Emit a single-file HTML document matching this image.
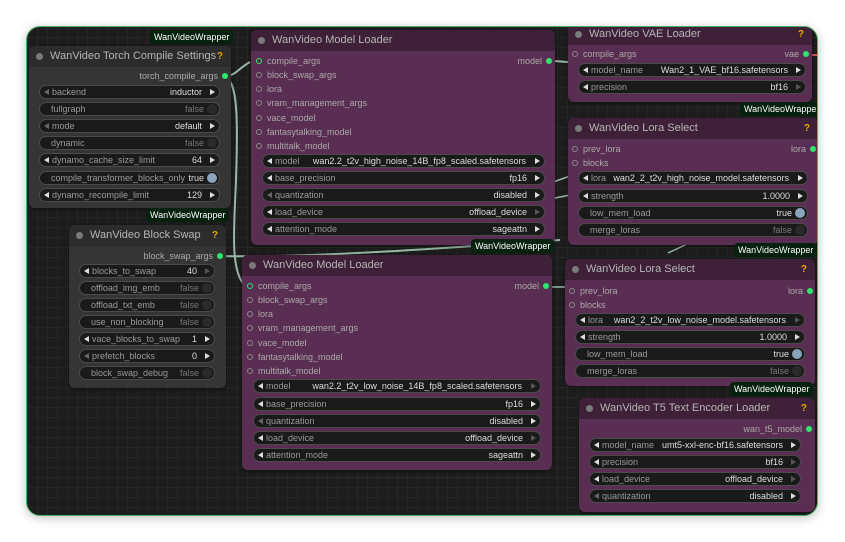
<!DOCTYPE html>
<html><head><meta charset="utf-8"><style>
*{box-sizing:border-box;margin:0;padding:0}
body{width:845px;height:542px;background:#fff;position:relative;overflow:hidden;font-family:"Liberation Sans",sans-serif;}
#cv{position:absolute;left:26px;top:26px;width:792px;height:490px;border:1px solid #4caf64;border-radius:14px;overflow:hidden;
background-color:#1d1d1d;background-image:linear-gradient(#262626 1px,transparent 1px),linear-gradient(90deg,#262626 1px,transparent 1px);background-size:10px 10px;box-shadow:0 2px 10px rgba(0,0,0,.25)}
#in{position:absolute;left:-27px;top:-27px;width:845px;height:542px}
.a{position:absolute}
.n{position:absolute;border-radius:6px;background:#353535;box-shadow:0 1px 4px rgba(0,0,0,.5)}
.n.p{background:#5a2d52}
.t{position:absolute;left:0;top:0;right:0;height:21px;background:#2c2c2c;border-radius:6px 6px 0 0;color:#b5b5b5;font-size:11px;line-height:21px;padding-left:21px}
.p .t{background:#3e2139}
.t:before{content:"";position:absolute;left:7px;top:7px;width:7px;height:7px;border-radius:50%;background:#7a7a7a}
.q{position:absolute;right:8px;top:0;color:#f0a500;font-weight:bold;font-size:10px}
.b{position:absolute;background:#07210f;color:#fff;font-size:9px;height:14px;line-height:14px;padding:0 4px;border-radius:4px}
.w{position:absolute;height:14px;border-radius:7px;background:#1a1a1a;border:1px solid #4a4a4a;font-size:9px;color:#999;line-height:12px}
.w .l{position:absolute;left:12px}
.w .v{position:absolute;right:17px;color:#ddd}
.w:before{content:"";position:absolute;left:4px;top:3px;border:3.5px solid transparent;border-right:5px solid #ddd;border-left:0}
.w:after{content:"";position:absolute;right:4px;top:3px;border:3.5px solid transparent;border-left:5px solid #ddd;border-right:0}
.w.d:after{border-left-color:#555}.w.dl:before{border-right-color:#666}
.w.tg:before,.w.tg:after{display:none}
.w.tg .l{left:11px}
.w.tg .v{right:15px;color:#777}
.w.tg i{position:absolute;right:2px;top:1px;width:10px;height:10px;border-radius:50%;background:#2a2a2a}
.w.tg.on .v{color:#ddd}.w.tg.on i{background:#8aa4be}
.r{position:absolute;font-size:9px;color:#aaa;line-height:12px}
.r.i{padding-left:11px}
.r.i:before{content:"";position:absolute;left:0;top:3px;width:4px;height:4px;border:1.5px solid #888;border-radius:50%}
.r.g:before{border-color:#2ee66b}
.r.o{padding-right:10px;text-align:right}
.r.o:after{content:"";position:absolute;right:0;top:3px;width:6px;height:6px;border-radius:50%;background:#2ee66b}
</style></head><body>
<div id="cv"><div id="in">
<svg class="a" style="left:0;top:0" width="845" height="542" fill="none" stroke="#9ab8a8" stroke-width="2">
<path d="M224 76 C236 76 236 70 250 62"/>
<path d="M224 76 C238 80 238 120 236 180 C234 230 230 270 245 286"/>
<path d="M218 256 C300 258 420 250 560 240"/>
<path d="M552 61 C560 61 562 62 570 62"/>
<path d="M545 185 L570 176" stroke-width="1.5"/>
<path d="M545 200 L570 195" stroke-width="1.5"/>
<path d="M668 253 L700 238" stroke-width="1.5"/>
<path d="M548 287 L566 287" stroke-width="1.5"/>
<path d="M812 55 L818 55" stroke="#d55"/>
</svg>

<!-- Torch compile -->
<div class="b" style="left:150px;top:30px">WanVideoWrapper</div>
<div class="n" style="left:29px;top:46px;width:202px;height:162px"><div class="t">WanVideo Torch Compile Settings<span class="q">?</span></div></div>
<div class="r o" style="left:120px;top:70px;width:108px">torch_compile_args</div>
<div class="w dl" style="left:39px;top:85px;width:181px"><span class="l">backend</span><span class="v">inductor</span></div>
<div class="w tg" style="left:39px;top:102px;width:181px"><span class="l">fullgraph</span><span class="v">false</span><i></i></div>
<div class="w dl" style="left:39px;top:119px;width:181px"><span class="l">mode</span><span class="v">default</span></div>
<div class="w tg" style="left:39px;top:136px;width:181px"><span class="l">dynamic</span><span class="v">false</span><i></i></div>
<div class="w" style="left:39px;top:153px;width:181px"><span class="l">dynamo_cache_size_limit</span><span class="v">64</span></div>
<div class="w tg on" style="left:39px;top:171px;width:181px"><span class="l">compile_transformer_blocks_only</span><span class="v">true</span><i></i></div>
<div class="w" style="left:39px;top:188px;width:181px"><span class="l">dynamo_recompile_limit</span><span class="v">129</span></div>

<!-- Block swap -->
<div class="b" style="left:146px;top:208px">WanVideoWrapper</div>
<div class="n" style="left:69px;top:225px;width:157px;height:163px"><div class="t">WanVideo Block Swap<span class="q">?</span></div></div>
<div class="r o" style="left:120px;top:250px;width:103px">block_swap_args</div>
<div class="w d" style="left:79px;top:264px;width:136px"><span class="l">blocks_to_swap</span><span class="v">40</span></div>
<div class="w tg" style="left:79px;top:281px;width:136px"><span class="l">offload_img_emb</span><span class="v">false</span><i></i></div>
<div class="w tg" style="left:79px;top:298px;width:136px"><span class="l">offload_txt_emb</span><span class="v">false</span><i></i></div>
<div class="w tg" style="left:79px;top:315px;width:136px"><span class="l">use_non_blocking</span><span class="v">false</span><i></i></div>
<div class="w" style="left:79px;top:332px;width:136px"><span class="l">vace_blocks_to_swap</span><span class="v">1</span></div>
<div class="w dl" style="left:79px;top:349px;width:136px"><span class="l">prefetch_blocks</span><span class="v">0</span></div>
<div class="w tg" style="left:79px;top:366px;width:136px"><span class="l">block_swap_debug</span><span class="v">false</span><i></i></div>

<!-- Model loader 1 -->
<div class="n p" style="left:251px;top:30px;width:304px;height:215px"><div class="t">WanVideo Model Loader</div></div>
<div class="r i g" style="left:256px;top:55px">compile_args</div>
<div class="r i" style="left:256px;top:69px">block_swap_args</div>
<div class="r i" style="left:256px;top:83px">lora</div>
<div class="r i" style="left:256px;top:97px">vram_management_args</div>
<div class="r i" style="left:256px;top:112px">vace_model</div>
<div class="r i" style="left:256px;top:126px">fantasytalking_model</div>
<div class="r i" style="left:256px;top:140px">multitalk_model</div>
<div class="r o" style="left:480px;top:55px;width:72px">model</div>
<div class="w" style="left:262px;top:154px;width:283px"><span class="l">model</span><span class="v" style="right:18px">wan2.2_t2v_high_noise_14B_fp8_scaled.safetensors</span></div>
<div class="w" style="left:262px;top:171px;width:283px"><span class="l">base_precision</span><span class="v">fp16</span></div>
<div class="w dl" style="left:262px;top:188px;width:283px"><span class="l">quantization</span><span class="v">disabled</span></div>
<div class="w d" style="left:262px;top:205px;width:283px"><span class="l">load_device</span><span class="v">offload_device</span></div>
<div class="w" style="left:262px;top:222px;width:283px"><span class="l">attention_mode</span><span class="v">sageattn</span></div>
<div class="b" style="left:471px;top:239px">WanVideoWrapper</div>

<!-- Model loader 2 -->
<div class="n p" style="left:242px;top:255px;width:310px;height:215px"><div class="t">WanVideo Model Loader</div></div>
<div class="r i g" style="left:247px;top:280px">compile_args</div>
<div class="r i" style="left:247px;top:294px">block_swap_args</div>
<div class="r i" style="left:247px;top:308px">lora</div>
<div class="r i" style="left:247px;top:322px">vram_management_args</div>
<div class="r i" style="left:247px;top:337px">vace_model</div>
<div class="r i" style="left:247px;top:351px">fantasytalking_model</div>
<div class="r i" style="left:247px;top:365px">multitalk_model</div>
<div class="r o" style="left:470px;top:280px;width:79px">model</div>
<div class="w d" style="left:253px;top:379px;width:288px"><span class="l">model</span><span class="v" style="right:18px">wan2.2_t2v_low_noise_14B_fp8_scaled.safetensors</span></div>
<div class="w" style="left:253px;top:397px;width:288px"><span class="l">base_precision</span><span class="v">fp16</span></div>
<div class="w dl" style="left:253px;top:414px;width:288px"><span class="l">quantization</span><span class="v">disabled</span></div>
<div class="w d" style="left:253px;top:431px;width:288px"><span class="l">load_device</span><span class="v">offload_device</span></div>
<div class="w" style="left:253px;top:448px;width:288px"><span class="l">attention_mode</span><span class="v">sageattn</span></div>

<!-- VAE -->
<div class="n p" style="left:568px;top:22px;width:244px;height:80px"><div class="t" style="top:2px">WanVideo VAE Loader<span class="q">?</span></div></div>
<div class="r i" style="left:572px;top:48px">compile_args</div>
<div class="r o" style="left:750px;top:48px;width:59px">vae</div>
<div class="w" style="left:578px;top:63px;width:228px"><span class="l">model_name</span><span class="v">Wan2_1_VAE_bf16.safetensors</span></div>
<div class="w d" style="left:578px;top:80px;width:228px"><span class="l">precision</span><span class="v">bf16</span></div>
<div class="b" style="left:740px;top:102px">WanVideoWrapper</div>

<!-- Lora 1 -->
<div class="n p" style="left:568px;top:118px;width:250px;height:127px"><div class="t">WanVideo Lora Select<span class="q">?</span></div></div>
<div class="r i" style="left:572px;top:143px">prev_lora</div>
<div class="r i" style="left:572px;top:157px">blocks</div>
<div class="r o" style="left:760px;top:143px;width:56px">lora</div>
<div class="w" style="left:578px;top:171px;width:230px"><span class="l">lora</span><span class="v" style="right:18px">wan2_2_t2v_high_noise_model.safetensors</span></div>
<div class="w" style="left:578px;top:189px;width:230px"><span class="l">strength</span><span class="v">1.0000</span></div>
<div class="w tg on" style="left:578px;top:206px;width:230px"><span class="l">low_mem_load</span><span class="v">true</span><i></i></div>
<div class="w tg" style="left:578px;top:223px;width:230px"><span class="l">merge_loras</span><span class="v">false</span><i></i></div>
<div class="b" style="left:734px;top:243px">WanVideoWrapper</div>

<!-- Lora 2 -->
<div class="n p" style="left:565px;top:259px;width:250px;height:127px"><div class="t">WanVideo Lora Select<span class="q">?</span></div></div>
<div class="r i" style="left:569px;top:285px">prev_lora</div>
<div class="r i" style="left:569px;top:299px">blocks</div>
<div class="r o" style="left:760px;top:285px;width:53px">lora</div>
<div class="w d" style="left:575px;top:313px;width:230px"><span class="l">lora</span><span class="v" style="right:18px">wan2_2_t2v_low_noise_model.safetensors</span></div>
<div class="w" style="left:575px;top:330px;width:230px"><span class="l">strength</span><span class="v">1.0000</span></div>
<div class="w tg on" style="left:575px;top:347px;width:230px"><span class="l">low_mem_load</span><span class="v">true</span><i></i></div>
<div class="w tg" style="left:575px;top:364px;width:230px"><span class="l">merge_loras</span><span class="v">false</span><i></i></div>
<div class="b" style="left:730px;top:382px">WanVideoWrapper</div>

<!-- T5 -->
<div class="n p" style="left:579px;top:398px;width:236px;height:114px"><div class="t">WanVideo T5 Text Encoder Loader<span class="q">?</span></div></div>
<div class="r o" style="left:700px;top:423px;width:112px">wan_t5_model</div>
<div class="w" style="left:589px;top:438px;width:212px"><span class="l">model_name</span><span class="v">umt5-xxl-enc-bf16.safetensors</span></div>
<div class="w d" style="left:589px;top:455px;width:212px"><span class="l">precision</span><span class="v">bf16</span></div>
<div class="w d" style="left:589px;top:472px;width:212px"><span class="l">load_device</span><span class="v">offload_device</span></div>
<div class="w dl" style="left:589px;top:489px;width:212px"><span class="l">quantization</span><span class="v">disabled</span></div>
</div></div>
</body></html>
